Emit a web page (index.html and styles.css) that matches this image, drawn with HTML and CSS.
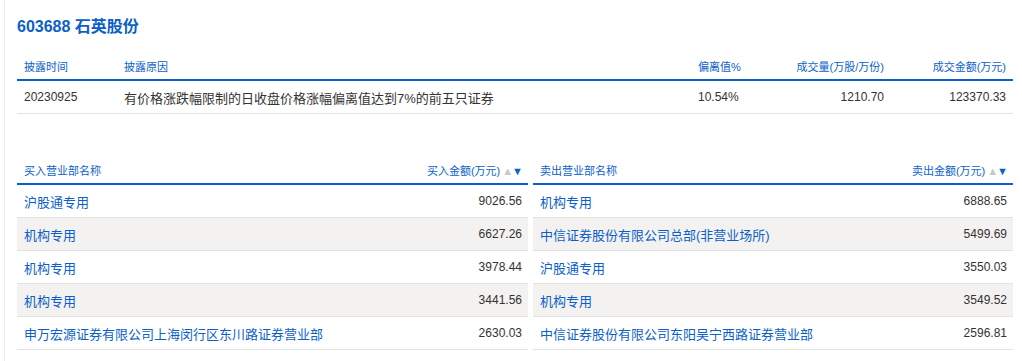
FILE: index.html
```html
<!DOCTYPE html>
<html lang="zh-CN">
<head>
  <meta charset="UTF-8" />
  <title>603688 石英股份 - 龙虎榜</title>
  <link rel="stylesheet" href="styles.css">
</head>
<body>
  <div class="page">
    <h2 class="title">603688 石英股份</h2>

    <table class="info">
      <colgroup>
        <col style="width:100px"><col style="width:574px"><col style="width:80px"><col style="width:120px"><col>
      </colgroup>
      <thead>
        <tr>
          <th>披露时间</th>
          <th>披露原因</th>
          <th>偏离值%</th>
          <th class="r">成交量(万股/万份)</th>
          <th class="r">成交金额(万元)</th>
        </tr>
      </thead>
      <tbody>
        <tr>
          <td class="num">20230925</td>
          <td>有价格涨跌幅限制的日收盘价格涨幅偏离值达到7%的前五只证券</td>
          <td class="num">10.54%</td>
          <td class="num r">1210.70</td>
          <td class="num r">123370.33</td>
        </tr>
      </tbody>
    </table>

    <div class="lists">
      <table class="list">
        <thead>
          <tr>
            <th>买入营业部名称</th>
            <th class="r">买入金额(万元)<span class="sort"><i class="up">▲</i><i class="down">▼</i></span></th>
          </tr>
        </thead>
        <tbody>
          <tr><td><a href="#">沪股通专用</a></td><td class="num r">9026.56</td></tr>
          <tr><td><a href="#">机构专用</a></td><td class="num r">6627.26</td></tr>
          <tr><td><a href="#">机构专用</a></td><td class="num r">3978.44</td></tr>
          <tr><td><a href="#">机构专用</a></td><td class="num r">3441.56</td></tr>
          <tr><td><a href="#">申万宏源证券有限公司上海闵行区东川路证券营业部</a></td><td class="num r">2630.03</td></tr>
        </tbody>
      </table>

      <table class="list">
        <thead>
          <tr>
            <th>卖出营业部名称</th>
            <th class="r">卖出金额(万元)<span class="sort"><i class="up">▲</i><i class="down">▼</i></span></th>
          </tr>
        </thead>
        <tbody>
          <tr><td><a href="#">机构专用</a></td><td class="num r">6888.65</td></tr>
          <tr><td><a href="#">中信证券股份有限公司总部(非营业场所)</a></td><td class="num r">5499.69</td></tr>
          <tr><td><a href="#">沪股通专用</a></td><td class="num r">3550.03</td></tr>
          <tr><td><a href="#">机构专用</a></td><td class="num r">3549.52</td></tr>
          <tr><td><a href="#">中信证券股份有限公司东阳吴宁西路证券营业部</a></td><td class="num r">2596.81</td></tr>
        </tbody>
      </table>
    </div>
  </div>
</body>
</html>
```

FILE: styles.css
```css
:root {
  --blue: #0c5fc8;
  --text: #333;
  --line: #e2e2e2;
  --alt: #f3f2f1;
}

body {
  margin: 0;
  background: #fff;
  font-family: "Liberation Sans", "Noto Sans CJK SC", sans-serif;
  color: var(--text);
}

.page {
  margin-left: 4px;
  border-left: 1px solid #ececec;
  padding: 17px 8px 0 12px;
  min-height: 361px;
  box-sizing: border-box;
  width: 1018px;
}

.title {
  margin: 0;
  font-size: 16px;
  line-height: 20px;
  font-weight: bold;
  color: var(--blue);
}

table {
  border-collapse: collapse;
  table-layout: fixed;
}

th {
  font-size: 11px;
  font-weight: normal;
  color: var(--blue);
  text-align: left;
  padding: 0 7px;
  height: 26px;
  border-bottom: 2px solid var(--blue);
  white-space: nowrap;
}

td {
  font-size: 13px;
  padding: 0 7px;
  height: 32px;
  border-bottom: 1px solid var(--line);
  white-space: nowrap;
}

.r {
  text-align: right;
}

.num {
  font-size: 12px;
}

.info {
  width: 996px;
  margin-top: 16px;
}

.lists {
  display: grid;
  grid-template-columns: 511px 480px;
  gap: 5px;
  margin-top: 42px;
  align-items: start;
}

.list {
  width: 100%;
}

.list th {
  height: 27px;
}

.list th:last-child,
.list td:last-child {
  padding-right: 6px;
}

.list tbody tr:nth-child(even) td {
  background: var(--alt);
}

.list a {
  color: var(--blue);
  text-decoration: none;
}

.sort {
  margin-left: 2px;
  font-size: 11px;
  letter-spacing: -1px;
}

.sort i {
  font-style: normal;
}

.sort .up {
  color: #c8c8c8;
}

.sort .down {
  color: var(--blue);
}
```
